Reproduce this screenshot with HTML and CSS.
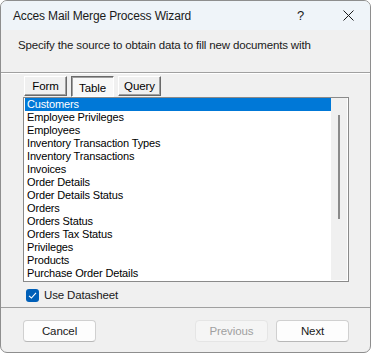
FILE: index.html
```html
<!DOCTYPE html>
<html lang="en">
<head>
  <meta charset="UTF-8" />
  <meta name="viewport" content="width=device-width, initial-scale=1.0"/>
  <title>Acces Mail Merge Process Wizard</title>
  <link rel="stylesheet" href="styles.css">
</head>
<body>
  <div class="window">
    <div class="titlebar">
      <span class="title">Acces Mail Merge Process Wizard</span>
      <span class="help">?</span>
      <span class="close">
        <svg width="11" height="11" viewBox="0 0 11 11">
          <path d="M0.5 0.5 L10.5 10.5 M10.5 0.5 L0.5 10.5" stroke="#1a1a1a" stroke-width="1" fill="none"/>
        </svg>
      </span>
    </div>

    <div class="content">
      <p class="prompt">Specify the source to obtain data to fill new documents with</p>
      <div class="divider"></div>

      <div class="source">
        <div class="tabs">
          <button type="button" class="tab">Form</button>
          <button type="button" class="tab active">Table</button>
          <button type="button" class="tab">Query</button>
        </div>

        <div class="listbox">
          <ul class="items">
            <li class="selected">Customers</li>
            <li>Employee Privileges</li>
            <li>Employees</li>
            <li>Inventory Transaction Types</li>
            <li>Inventory Transactions</li>
            <li>Invoices</li>
            <li>Order Details</li>
            <li>Order Details Status</li>
            <li>Orders</li>
            <li>Orders Status</li>
            <li>Orders Tax Status</li>
            <li>Privileges</li>
            <li>Products</li>
            <li>Purchase Order Details</li>
          </ul>
          <div class="scrollbar"><div class="thumb"></div></div>
        </div>

        <label class="check">
          <span class="box">
            <svg width="9" height="9" viewBox="0 0 9 9">
              <path d="M1 4.8 L3.4 7 L8 1.8" stroke="#fff" stroke-width="1.1" fill="none"/>
            </svg>
          </span>
          Use Datasheet
        </label>
      </div>
    </div>

    <div class="footer">
      <button type="button" class="btn">Cancel</button>
      <div class="nav">
        <button type="button" class="btn" disabled>Previous</button>
        <button type="button" class="btn">Next</button>
      </div>
    </div>
  </div>
</body>
</html>
```

FILE: styles.css
```css
* {
  box-sizing: border-box;
}

body {
  margin: 0;
  background: #ffffff;
  font-family: "Segoe UI", "Liberation Sans", sans-serif;
  font-size: 12px;
  color: #000;
}

.window {
  width: 371px;
  height: 353px;
  border: 1px solid #8e8e8e;
  border-radius: 7px;
  background: #f0f0f0;
  overflow: hidden;
  display: flex;
  flex-direction: column;
}

.titlebar {
  height: 29px;
  background: #eff4f9;
  display: flex;
  align-items: center;
  padding: 0 0 0 12px;
}

.title {
  flex: 1;
  font-size: 12px;
  letter-spacing: -0.15px;
  color: #1a1a1a;
}

.help {
  width: 20px;
  font-size: 13px;
  color: #1a1a1a;
  margin-right: 26px;
}

.close {
  display: flex;
  width: 27px;
}

.content {
  padding-top: 7px;
}

.prompt {
  margin: 0 0 19px 17px;
  line-height: 16px;
  font-size: 11.5px;
  letter-spacing: -0.15px;
  color: #1a1a1a;
}

.divider {
  border-top: 1px solid #a0a0a0;
  border-bottom: 1px solid #ffffff;
}

.source {
  margin: 2px 21px 0 22px;
}

.tabs {
  display: flex;
  gap: 4px;
  padding-left: 1px;
  height: 21px;
}

.tab {
  width: 43px;
  height: 20px;
  padding: 0;
  font-family: "Liberation Sans", sans-serif;
  font-size: 11.5px;
  letter-spacing: -0.1px;
  color: #000;
  background: #f0f0f0;
  border: 1px solid;
  border-color: #ffffff #696969 #696969 #ffffff;
  box-shadow: inset -1px -1px 0 #a0a0a0;
}

.tab.active {
  height: 21px;
  background: #f8f8f8;
  border-color: #696969 #ffffff #ffffff #696969;
  box-shadow: inset 1px 1px 0 #a0a0a0;
  padding-top: 2px;
}

.listbox {
  display: flex;
  height: 185px;
  border: 1px solid #8a8a8a;
  background: #ffffff;
}

.items {
  flex: 1;
  margin: 0;
  padding: 0 0 0 1px;
  list-style: none;
  font-family: "Liberation Sans", sans-serif;
  font-size: 11px;
  letter-spacing: -0.15px;
}

.items li {
  height: 13px;
  line-height: 13px;
  padding-left: 2px;
  white-space: nowrap;
}

.items li.selected {
  background: #0078d7;
  color: #ffffff;
}

.scrollbar {
  width: 16px;
  margin: 0 1px 1px 0;
  background: #f0f0f0;
  display: flex;
  justify-content: center;
  padding-top: 17px;
}

.thumb {
  width: 2px;
  height: 104px;
  background: #8a8a8a;
}

.check {
  display: flex;
  align-items: center;
  gap: 5px;
  margin: 6px 0 0 3px;
  height: 14px;
  font-size: 11.5px;
  letter-spacing: -0.15px;
  color: #1a1a1a;
}

.box {
  width: 13px;
  height: 13px;
  border-radius: 3px;
  background: #005fb8;
  display: flex;
  align-items: center;
  justify-content: center;
}

.footer {
  margin-top: auto;
  height: 45px;
  border-top: 1px solid #a0a0a0;
  display: flex;
  justify-content: space-between;
  padding: 12px 21px 0 22px;
}

.nav {
  display: flex;
  gap: 8px;
}

.btn {
  width: 73px;
  height: 22px;
  padding: 0;
  font-family: "Segoe UI", "Liberation Sans", sans-serif;
  font-size: 11.5px;
  letter-spacing: -0.1px;
  color: #1a1a1a;
  background: #fdfdfd;
  border: 1px solid #d0d0d0;
  border-bottom-color: #b8b8b8;
  border-radius: 4px;
}

.btn:disabled {
  background: #f5f5f5;
  border-color: #e5e5e5;
  color: #a0a0a0;
}
```
